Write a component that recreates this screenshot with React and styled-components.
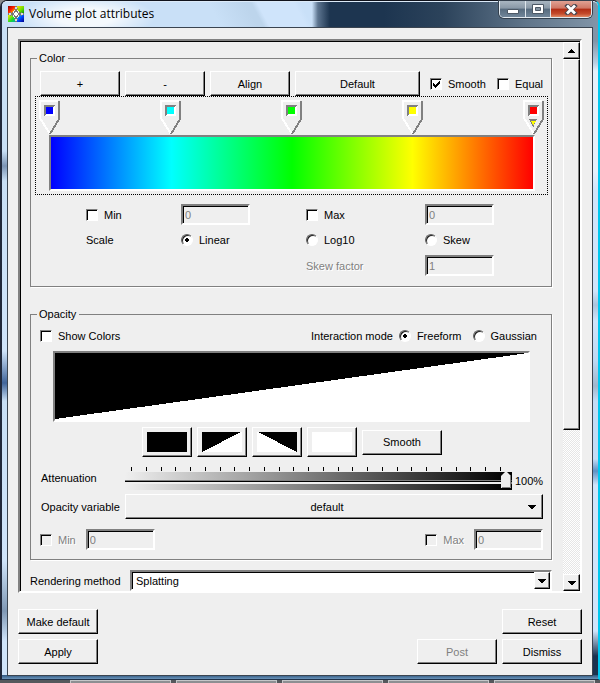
import React from "react";
import styled, { createGlobalStyle, css } from "styled-components";

const Global = createGlobalStyle`
  * { box-sizing: border-box; }
  body {
    margin: 0;
    background: #8a8c8e;
    font: 11px/14px "Liberation Sans", Arial, sans-serif;
    color: #000;
  }
  button, input, select { font: inherit; color: inherit; margin: 0; }
`;

const FACE = "#efefef";

const raised = css`
  border: 1px solid;
  border-color: #fff #000 #000 #fff;
  box-shadow: inset -1px -1px #808080;
`;

const sunken = css`
  border: 2px solid;
  border-color: #808080 #fff #fff #808080;
  box-shadow: inset 1px 1px #000;
`;

/* Window frame */

const Desktop = styled.div`
  min-height: 100vh;
  display: flex;
  flex-direction: column;
`;

const Window = styled.div`
  flex: 1;
  display: flex;
  flex-direction: column;
  padding: 0 5px 3px 5px;
  border: solid;
  border-width: 1px 2px 1px 2px;
  border-color: #10131c #00c8f0 #20324a #20283a;
  border-radius: 7px 7px 0 0;
  background:
    linear-gradient(#2d5680, #6b94ba) bottom / 100% 4px no-repeat,
    linear-gradient(#8195a8 0 40px, #b9cfe2 62px, #e4f0fb 70px 170px, #cfe4fa 190px 290px, #aac4dc 304px,
      #cfe4fa 320px, #bcd8f2 360px, #9fb6cc 385px, #c2dcf5 400px 458px, #5d92c4 470px, #cfe4fa 484px 630px,
      #1b3350 655px) right / 50% 100% no-repeat,
    linear-gradient(#c8dff5 0 150px, #7c94b4 165px, #c8dff5 180px, #cfe4fa 350px, #41659a 382px, #c8dff5 400px,
      #cfe4fa 560px, #7f98b4 610px, #cfe4fa 640px) left / 50% 100% no-repeat;
`;

const TitleBar = styled.header`
  display: flex;
  align-items: flex-start;
  height: 26px;
  margin: 0 -5px;
  padding: 0 6px 0 6px;
  border-top: 1px solid #dceaf8;
  border-radius: 5px 5px 0 0;
  background:
    radial-gradient(ellipse 70px 22px at 14% 60%, #ffffffcc 0 40%, #ffffff00),
    linear-gradient(62deg, #c9e0f7 0 36%, #bdd5ec 42% 43%, #cfe4fb 44% 50%, #cfe4fb00 51%),
    linear-gradient(90deg, #c9e0f8 0 52%, #5d7590 53%, #1d3550 55% 64%, #2c435b 74%, #60758a 88%, #8195a8);
`;

const AppIcon = styled.svg`
  width: 16px;
  height: 16px;
  margin-top: 4px;
`;

const Title = styled.h1`
  flex: 1;
  margin: 3px 0 0 5px;
  font: 12px/17px "Open Sans", "Noto Sans", sans-serif;
`;

const Caption = styled.div`
  display: flex;
  margin-top: -1px;
  border: 1px solid #e3eaf0;
  border-top: 0;
  border-radius: 0 0 5px 5px;
  overflow: hidden;
  box-shadow: 0 0 0 1px #34404d;
`;

const CaptionButton = styled.button`
  display: grid;
  place-items: center;
  width: ${(p) => (p.$close ? 41 : 25)}px;
  height: 16px;
  padding: 0;
  border: 0;
  border-left: ${(p) => (p.$first ? 0 : "1px solid #dfe6ec")};
  background: ${(p) =>
    p.$close
      ? "linear-gradient(#e0a193, #cf7765 45%, #b02c14 50%, #c44b2c 80%, #e08a66)"
      : "linear-gradient(#a9b6c1, #8998a6 45%, #566a7d 50%, #71869a)"};
`;

const Client = styled.main`
  flex: 1;
  display: flex;
  flex-direction: column;
  padding: 11px 10px 11px 10px;
  border: 1px solid #3a4450;
  background: ${FACE};
`;

const Taskbar = styled.div`
  display: flex;
  height: 3px;
  gap: 5px;
  padding-left: 70px;
  background: #55585c;
`;

const Task = styled.div`
  flex: 0 0 101px;
  border: 1px solid #c4c6c8;
  border-bottom: 0;
  background: #8d8f92;
`;

/* Scrolling panel */

const Panel = styled.div`
  display: flex;
  border: 2px solid;
  border-color: #808080 #fff #fff #808080;
  box-shadow: inset 1px 1px #000;
`;

const Content = styled.div`
  flex: 1;
  min-width: 0;
  padding: 10px 11px 0 10px;
`;

const Scrollbar = styled.div`
  display: flex;
  flex-direction: column;
  width: 17px;
  margin-top: 1px;
  background: repeating-conic-gradient(#fff 0 25%, #e6e6e6 0 50%) 0 0 / 2px 2px;
`;

const ScrollButton = styled.button`
  display: grid;
  place-items: center;
  height: 17px;
  padding: 0;
  background: ${FACE};
  ${raised}
`;

const Thumb = styled.div`
  flex: 372 1 0;
  background: ${FACE};
  ${raised}
`;

const Track = styled.div`
  flex: 145 1 0;
`;

const Group = styled.fieldset`
  min-width: 0;
  margin: 0 0 ${(p) => p.$after}px;
  padding: ${(p) => p.$pad};
  border: 1px solid #808080;
  box-shadow: 1px 1px #fff;
`;

const Legend = styled.legend`
  margin-left: 6px;
  padding: 0 3px 0 2px;
`;

const Button = styled.button`
  flex-shrink: 0;
  width: ${(p) => p.$w}px;
  height: 25px;
  padding: 0;
  background: ${FACE};
  ${raised}
  &:disabled { color: #808080; }
`;

const Row = styled.div`
  display: flex;
  align-items: center;
  gap: ${(p) => p.$gap || 0}px;
  margin: ${(p) => p.$m || 0};
`;

const Choice = styled.label`
  display: inline-flex;
  align-items: center;
  gap: 6px;
  white-space: nowrap;
  color: ${(p) => (p.$off ? "#808080" : "#000")};
  text-shadow: ${(p) => (p.$off ? "1px 1px #fff" : "none")};
`;

const LabelCell = styled.label`
  width: ${(p) => p.$w}px;
  white-space: nowrap;
`;

const tick = `url("data:image/svg+xml,%3Csvg xmlns='http://www.w3.org/2000/svg' width='7' height='7' shape-rendering='crispEdges'%3E%3Cpath d='M0 2h1v1h1v1h1v-1h1v-1h1v-1h1v-1h1v3h-1v1h-1v1h-1v1h-1v1h-1v-1h-1v-1h-1z'/%3E%3C/svg%3E")`;

const Check = styled.input.attrs({ type: "checkbox" })`
  appearance: none;
  width: 12px;
  height: 12px;
  background: ${(p) => (p.disabled ? FACE : "#fff")};
  border: 1px solid;
  border-color: #808080 #fff #fff #808080;
  box-shadow: inset 1px 1px #000;
  &:checked { background: #fff ${tick} 2px 2px no-repeat; }
`;

const Radio = styled.input.attrs({ type: "radio" })`
  appearance: none;
  width: 12px;
  height: 12px;
  border: 1px solid;
  border-color: #606060 #fff #fff #606060;
  border-radius: 50%;
  background: #fff;
  box-shadow: inset 1px 1px #202020;
  &:checked { background: radial-gradient(circle, #000 0 2px, #fff 2px 3px); }
`;

const Field = styled.input.attrs({ type: "text" })`
  width: 69px;
  height: 21px;
  padding: 1px 2px 0 2px;
  background: ${FACE};
  border-radius: 0;
  ${sunken}
  &:disabled { color: #808080; }
`;

/* Colour table */

const ColorEditor = styled.div`
  margin: 0 3px 9px 4px;
  padding: 3px 2px 3px 3px;
  border: 1px dotted #000;
`;

const Markers = styled.div`
  display: flex;
  justify-content: space-between;
`;

const MarkerButton = styled.button`
  padding: 0;
  border: 0;
  background: none;
  svg { display: block; }
`;

const Spectrum = styled.div`
  height: 56px;
  margin: 0 10px;
  border: 2px solid;
  border-color: #808080 #fff #fff #808080;
  background: linear-gradient(90deg, #00f, #0ff 25%, #0f0 50%, #ff0 75%, #f00);
`;

const ScaleGrid = styled.div`
  display: grid;
  grid-template-columns: 95fr 125fr 119fr 126fr;
  grid-template-rows: 21px 30px 21px;
  align-items: center;
  margin-left: 55px;
`;

const FieldLabel = styled.label`
  color: #808080;
  text-shadow: 1px 1px #fff;
  white-space: nowrap;
`;

/* Opacity */

const OpacityCurve = styled.div`
  height: 71px;
  margin: 8px 21px 5px 22px;
  border: 2px solid;
  border-color: #808080 #fff #fff #808080;
  svg { display: block; width: 100%; height: 100%; }
`;

const ShapeButton = styled.button`
  display: grid;
  place-items: center;
  width: 50px;
  height: 30px;
  padding: 0;
  background: ${FACE};
  ${raised}
`;

const AttenuationRow = styled.div`
  display: grid;
  grid-template-columns: 84px 1fr 31px;
  align-items: center;
  margin: 0 8px 0 10px;
  height: 24px;
`;

const SliderBox = styled.div`
  display: flex;
  flex-direction: column;
`;

const Ticks = styled.div`
  display: flex;
  justify-content: space-between;
  height: 5px;
  padding: 0 11px 0 6px;
`;

const Tick = styled.i`
  width: 1px;
  height: 4px;
  background: #000;
`;

const thumb = `url("data:image/svg+xml,%3Csvg xmlns='http://www.w3.org/2000/svg' width='11' height='17'%3E%3Cpath d='M0 16V4L4 0h2l4 4v12z' fill='%23efefef'/%3E%3Cpath d='M1 16.5h10V4' fill='none' stroke='%23000'/%3E%3Cpath d='M1 15.5h8.5V4' fill='none' stroke='%23808080'/%3E%3C/svg%3E")`;

const Slider = styled.input.attrs({ type: "range" })`
  appearance: none;
  width: 100%;
  height: 18px;
  margin: 0;
  background:
    linear-gradient(#808080 0 1px, #000 1px 2px, #efefef 2px 4px) 0 8px / 100% 4px no-repeat,
    linear-gradient(90deg, #efefef, #000);
  &::-webkit-slider-thumb {
    appearance: none;
    width: 11px;
    height: 17px;
    background: ${thumb} no-repeat;
  }
`;

const SelectBox = styled.div`
  display: grid;
  align-items: center;
  flex: 1;
  > * { grid-area: 1 / 1; }
  > svg, > span { justify-self: end; pointer-events: none; }
`;

const MenuSelect = styled.select`
  appearance: none;
  width: 100%;
  height: 25px;
  padding: 0 14px 0 0;
  border-radius: 0;
  background: ${FACE};
  text-align-last: center;
  ${raised}
`;

const MenuArrow = styled.svg`
  margin-right: 7px;
`;

const ComboSelect = styled.select`
  appearance: none;
  width: 100%;
  height: 21px;
  padding: 0 20px 0 4px;
  border-radius: 0;
  background: #fff;
  ${sunken}
`;

const ComboArrow = styled.span`
  display: grid;
  place-items: center;
  width: 16px;
  height: 17px;
  margin-right: 2px;
  background: ${FACE};
  ${raised}
`;

const Spacer = styled.div`
  flex: 1;
`;

const Footer = styled.footer`
  display: grid;
  grid-template-columns: 1fr auto auto;
  gap: 5px;
  margin-top: 16px;
`;

const COLORS = ["#0000ff", "#00ffff", "#00ff00", "#ffff00", "#ff0000"];

function Arrow({ up, as: As = "svg" }) {
  return (
    <As width="8" height="4" viewBox="0 0 8 4" shapeRendering="crispEdges" aria-hidden="true">
      <path d={up ? "M3 0h1v1h1v1h1v1h1v1H0V3h1V2h1V1h1z" : "M0 0h8v1H7v1H6v1H5v1H3V3H2V2H1V1H0z"} />
    </As>
  );
}

function Marker({ color, stacked }) {
  return (
    <MarkerButton aria-label={`Color ${color}`}>
      <svg width="22" height="35" viewBox="0 0 22 35" shapeRendering="crispEdges">
        <path d="M0 0h20v19L11 34 0 18z" fill={FACE} />
        <path d="M1 0v18l10 16M0 1h19" fill="none" stroke="#fff" strokeWidth="2" />
        <path d="M20 1v18l-9 15" fill="none" stroke="#808080" strokeWidth="2" />
        <path d="M5 5h11v11H5z" fill="#fff" />
        <path d="M5 5h11v1h-1v1H7v8H6v1H5z" fill="#808080" />
        <path d="M7 7h7v7H7z" fill={color} />
        {stacked && (
          <>
            <path d="M5 19h9v1h-1v2h-1v2h-1v3h-1v-1H9v-2H8v-2H7v-2H6v-1H5z" fill="#808080" />
            <path d="M8 21h5v1h-1v1h-1v2h-1v-1H9v-2H8z" fill="#ff0" />
          </>
        )}
      </svg>
    </MarkerButton>
  );
}

function Shape({ points, label }) {
  return (
    <ShapeButton aria-label={label}>
      <svg width="40" height="20" shapeRendering="crispEdges">
        <path d="M0 0h40v20H0z" fill="#fff" />
        <polygon points={points} />
      </svg>
    </ShapeButton>
  );
}

function CaptionButtons() {
  return (
    <Caption>
      <CaptionButton $first aria-label="Minimize">
        <svg width="12" height="12"><path d="M.5 6.500h11v4H.5z" fill="#fff" stroke="#4d5966" /></svg>
      </CaptionButton>
      <CaptionButton aria-label="Maximize">
        <svg width="12" height="10">
          <path d="M.5.500h11v9H.5z" fill="#fff" stroke="#4d5966" />
          <path d="M3.500 3.500h5v3h-5z" fill="#8594a2" stroke="#4d5966" />
        </svg>
      </CaptionButton>
      <CaptionButton $close aria-label="Close">
        <svg width="14" height="11">
          <path d="M3.500 2l7 7M10.500 2l-7 7" stroke="#4d4850" strokeWidth="4.500" strokeLinecap="square" />
          <path d="M3 1.500l8 8M11 1.500l-8 8" stroke="#fff" strokeWidth="2.800" />
        </svg>
      </CaptionButton>
    </Caption>
  );
}

function VolumeIcon() {
  return (
    <AppIcon viewBox="0 0 16 16" shapeRendering="crispEdges" aria-hidden="true">
      <defs>
        <linearGradient id="red" x1="0" y1="0" x2="1" y2="1"><stop stopColor="#900" /><stop offset=".5" stopColor="#f20" /><stop offset="1" stopColor="#fe0" /></linearGradient>
        <linearGradient id="green" x1="0" y1="0" x2="1" y2="1"><stop stopColor="#fd0" /><stop offset=".6" stopColor="#6d0" /><stop offset="1" stopColor="#090" /></linearGradient>
        <linearGradient id="lime" x1="0" y1="0" x2="1" y2="1"><stop stopColor="#fe0" /><stop offset=".6" stopColor="#2d2" /><stop offset="1" stopColor="#0aa" /></linearGradient>
        <linearGradient id="blue" x1="0" y1="0" x2="1" y2="1"><stop stopColor="#0df" /><stop offset=".5" stopColor="#04f" /><stop offset="1" stopColor="#008" /></linearGradient>
      </defs>
      <path d="M0 0h16v16H0z" fill="#777" />
      <path d="M0 0h7v7H0z" fill="url(#red)" />
      <path d="M9 0h7v7H9z" fill="url(#green)" />
      <path d="M0 9h7v7H0z" fill="url(#lime)" />
      <path d="M9 9h7v7H9z" fill="url(#blue)" />
      <path d="M7 0h2v5H7zM7 11h2v5H7zM0 7h5v2H0zM11 7h5v2h-5zM6 2h4v1H6zM6 13h4v1H6zM2 6h1v4H2zM13 6h1v4h-1z" fill="#777" />
      <path d="M7 1h2v2H7zM7 13h2v2H7zM1 7h2v2H1zM13 7h2v2h-2z" fill="#ddd" />
      <path d="M6 4h4v1h1v1h1v4h-1v1h-1v1H6v-1H5v-1H4V6h1V5h1z" fill="#777" />
      <path d="M6 4h1v1H6zM9 4h1v1H9zM5 5h1v2H5zM10 5h1v2h-1zM5 9h1v2H5zM10 9h1v2h-1zM6 11h1v1H6zM9 11h1v1H9z" fill="#eee" />
      <path d="M7 6h2v1h1v2H9v1H7V9H6V7h1z" fill="#fff" />
    </AppIcon>
  );
}

function ColorGroup() {
  return (
    <Group $pad="6px 0 10px 0" $after={20}>
      <Legend>Color</Legend>
      <Row $gap={5} $m="0 8px 0 9px">
        <Button $w={80}>+</Button>
        <Button $w={80}>-</Button>
        <Button $w={80}>Align</Button>
        <Button $w={125}>Default</Button>
        <Spacer />
        <Row $gap={11}>
          <Choice><Check defaultChecked />Smooth</Choice>
          <Choice><Check />Equal</Choice>
        </Row>
      </Row>
      <ColorEditor>
        <Markers>
          {COLORS.map((c, i) => <Marker key={c} color={c} stacked={i === COLORS.length - 1} />)}
        </Markers>
        <Spectrum />
      </ColorEditor>
      <ScaleGrid>
        <Choice><Check />Min</Choice>
        <Field disabled defaultValue="0" aria-label="Minimum" />
        <Choice><Check />Max</Choice>
        <Field disabled defaultValue="0" aria-label="Maximum" />
        <span>Scale</span>
        <Choice><Radio name="scale" defaultChecked />Linear</Choice>
        <Choice><Radio name="scale" />Log10</Choice>
        <Choice><Radio name="scale" />Skew</Choice>
        <span />
        <span />
        <FieldLabel htmlFor="skew">Skew factor</FieldLabel>
        <Field id="skew" disabled defaultValue="1" />
      </ScaleGrid>
    </Group>
  );
}

function OpacityGroup() {
  return (
    <Group $pad="8px 0 9px 0" $after={10}>
      <Legend>Opacity</Legend>
      <Row $m="0 14px 0 9px">
        <Choice><Check />Show Colors</Choice>
        <Spacer />
        <Row $gap={6}>
          <span>Interaction mode</span>
          <Row $gap={11}>
            <Choice><Radio name="mode" defaultChecked />Freeform</Choice>
            <Choice><Radio name="mode" />Gaussian</Choice>
          </Row>
        </Row>
      </Row>
      <OpacityCurve>
        <svg viewBox="0 0 473 67" preserveAspectRatio="none" shapeRendering="crispEdges" role="img" aria-label="Opacity curve">
          <path d="M0 0h473v67H0z" fill="#fff" />
          <path d="M0 0h473L0 66z" />
        </svg>
      </OpacityCurve>
      <Row $gap={5} $m="0 0 9px 111px">
        <Shape label="Solid" points="0,0 40,0 40,20 0,20" />
        <Shape label="Ramp up" points="0,0 39,0 0,20" />
        <Shape label="Ramp down" points="1,0 40,0 40,20" />
        <Shape label="Empty" points="" />
        <Button $w={80}>Smooth</Button>
      </Row>
      <AttenuationRow>
        <label htmlFor="attenuation">Attenuation</label>
        <SliderBox>
          <Ticks>{Array.from({ length: 26 }, (_, i) => <Tick key={i} />)}</Ticks>
          <Slider id="attenuation" min="0" max="100" defaultValue="100" />
        </SliderBox>
        <Row $m="6px 0 0 3px">100%</Row>
      </AttenuationRow>
      <Row $m="4px 8px 10px 10px">
        <LabelCell $w={84} htmlFor="variable">Opacity variable</LabelCell>
        <SelectBox>
          <MenuSelect id="variable"><option>default</option></MenuSelect>
          <Arrow as={MenuArrow} />
        </SelectBox>
      </Row>
      <Row $m="0 8px 0 9px" $gap={10}>
        <Choice $off><Check disabled />Min</Choice>
        <Field disabled defaultValue="0" aria-label="Opacity minimum" />
        <Spacer />
        <Choice $off><Check disabled />Max</Choice>
        <Field disabled defaultValue="0" aria-label="Opacity maximum" />
      </Row>
    </Group>
  );
}

export default function App() {
  return (
    <Desktop>
      <Global />
      <Window>
        <TitleBar>
          <VolumeIcon />
          <Title>Volume plot attributes</Title>
          <CaptionButtons />
        </TitleBar>
        <Client>
          <Panel>
            <Content>
              <ColorGroup />
              <OpacityGroup />
              <Row>
                <LabelCell $w={100} htmlFor="render">Rendering method</LabelCell>
                <SelectBox>
                  <ComboSelect id="render"><option>Splatting</option></ComboSelect>
                  <ComboArrow><Arrow /></ComboArrow>
                </SelectBox>
              </Row>
            </Content>
            <Scrollbar>
              <ScrollButton aria-label="Scroll up"><Arrow up /></ScrollButton>
              <Thumb />
              <Track />
              <ScrollButton aria-label="Scroll down"><Arrow /></ScrollButton>
            </Scrollbar>
          </Panel>
          <Footer>
            <Button $w={80}>Make default</Button>
            <span />
            <Button $w={80}>Reset</Button>
            <Button $w={80}>Apply</Button>
            <Button $w={80} disabled>Post</Button>
            <Button $w={80}>Dismiss</Button>
          </Footer>
        </Client>
      </Window>
      <Taskbar aria-hidden="true">
        <Task /><Task /><Task /><Task /><Task />
      </Taskbar>
    </Desktop>
  );
}
